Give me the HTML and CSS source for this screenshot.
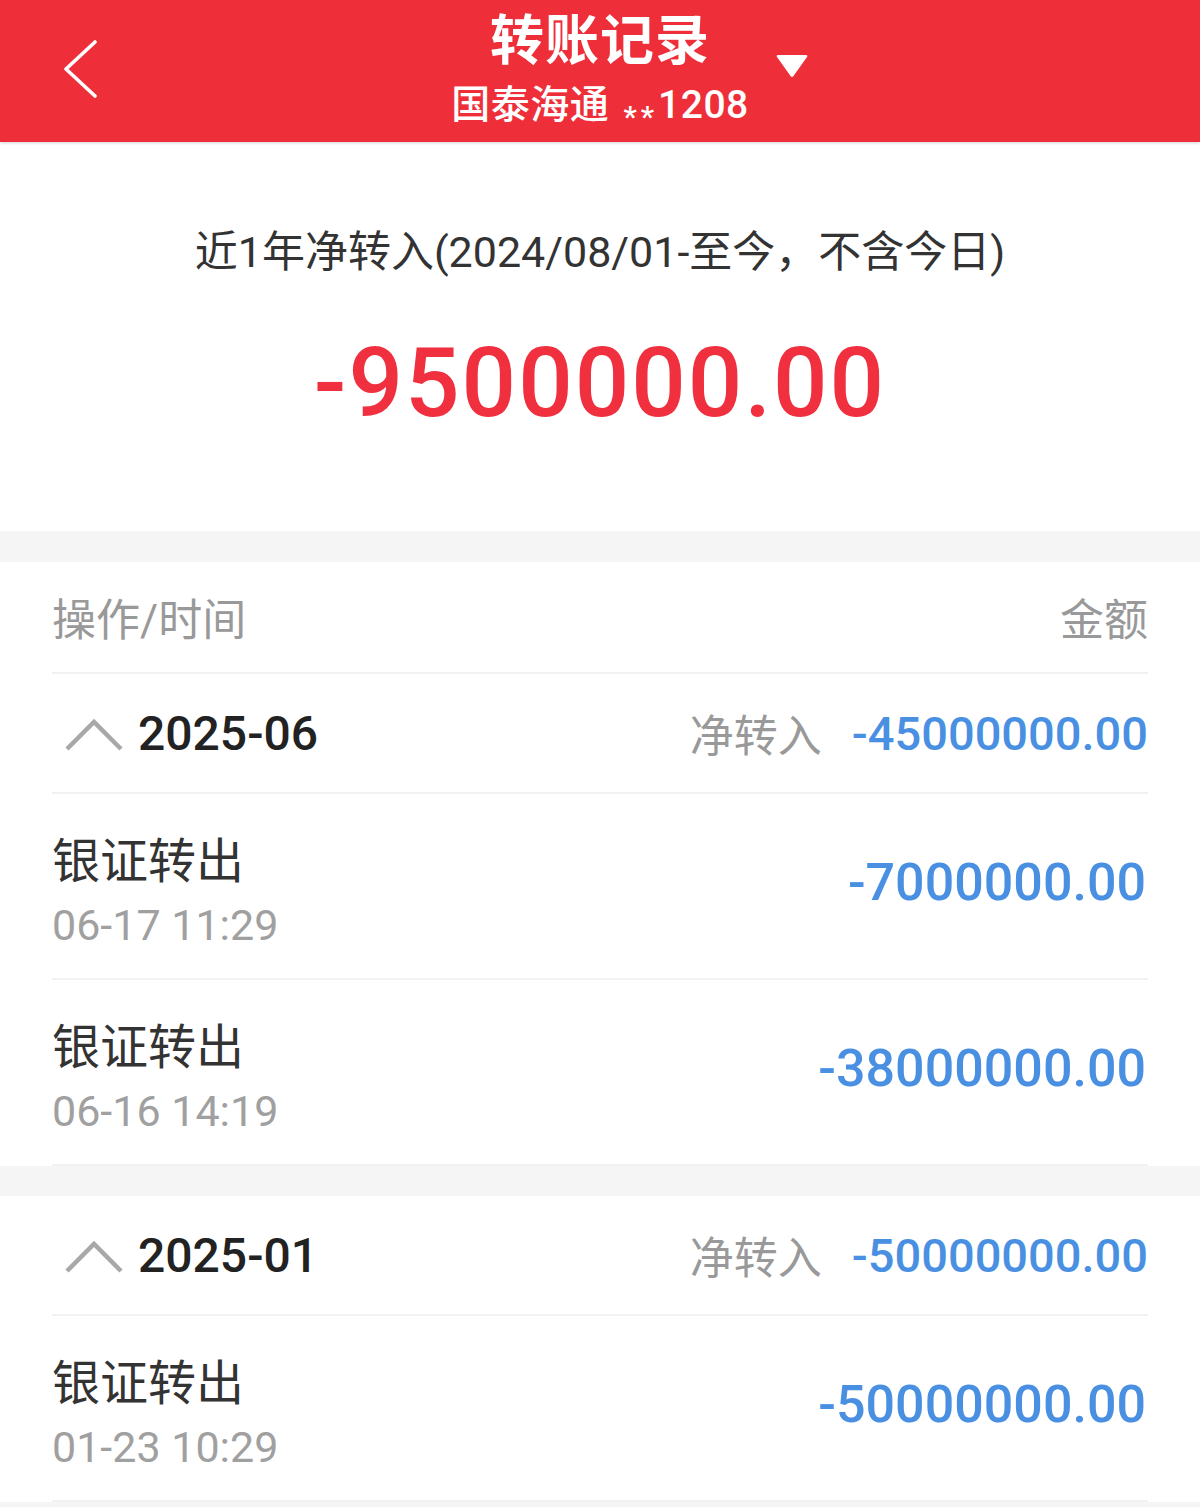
FILE: index.html
```html
<!DOCTYPE html>
<html lang="zh-CN">
<head>
<meta charset="utf-8">
<title>转账记录</title>
<link rel="stylesheet" href="styles.css">
</head>
<body>
<header class="topbar">
  <div class="topbar-left">
    <svg class="back" width="36" height="60" viewBox="0 0 36 60"><polyline points="32,2 3,29 32,56" fill="none" stroke="#fff" stroke-width="3.6" stroke-linecap="round" stroke-linejoin="round"/></svg>
  </div>
  <div class="topbar-center">
    <div class="title">转账记录</div>
    <div class="subtitle">国泰海通 <span class="mask">**</span>1208</div>
  </div>
  <div class="topbar-right">
    <svg class="caret" width="34" height="26" viewBox="0 0 34 26"><path d="M3 2 H31 Q33 2 32 4 L18.5 23 Q17 25 15.5 23 L2 4 Q1 2 3 2 Z" fill="#fff"/></svg>
  </div>
</header>

<section class="summary">
  <div class="summary-label">近1年净转入(2024/08/01-至今，不含今日)</div>
  <div class="summary-value">-9500000.00</div>
</section>

<section class="card">
  <div class="row head-row">
    <span class="muted">操作/时间</span>
    <span class="muted">金额</span>
  </div>
  <div class="row group-row">
    <div class="group-left">
      <svg class="up" width="60" height="36" viewBox="0 0 60 36"><polyline points="3,32 30,5 57,32" fill="none" stroke="#a8a8a8" stroke-width="4.5"/></svg>
      <span class="month">2025-06</span>
    </div>
    <div class="group-right">
      <span class="muted">净转入</span>
      <span class="group-amount">-45000000.00</span>
    </div>
  </div>
  <div class="row item-row">
    <div class="item-left">
      <div class="item-name">银证转出</div>
      <div class="item-time">06-17 11:29</div>
    </div>
    <div class="item-amount">-7000000.00</div>
  </div>
  <div class="row item-row">
    <div class="item-left">
      <div class="item-name">银证转出</div>
      <div class="item-time">06-16 14:19</div>
    </div>
    <div class="item-amount">-38000000.00</div>
  </div>
</section>

<section class="card card-second">
  <div class="row group-row">
    <div class="group-left">
      <svg class="up" width="60" height="36" viewBox="0 0 60 36"><polyline points="3,32 30,5 57,32" fill="none" stroke="#a8a8a8" stroke-width="4.5"/></svg>
      <span class="month">2025-01</span>
    </div>
    <div class="group-right">
      <span class="muted">净转入</span>
      <span class="group-amount">-50000000.00</span>
    </div>
  </div>
  <div class="row item-row">
    <div class="item-left">
      <div class="item-name">银证转出</div>
      <div class="item-time">01-23 10:29</div>
    </div>
    <div class="item-amount">-50000000.00</div>
  </div>
</section>
</body>
</html>
```
FILE: styles.css
```css
* { box-sizing: border-box; }
html, body { margin: 0; padding: 0; }
body {
  background: #f5f5f5;
  font-family: Roboto, "Noto Sans CJK SC", sans-serif;
  color: #333;
}

.topbar {
  height: 142px;
  background: #ee2f3a;
  display: grid;
  grid-template-columns: 1fr auto 1fr;
  box-shadow: 0 1px 3px rgba(0,0,0,0.18);
  position: relative;
  z-index: 1;
}
.topbar-left { padding: 40px 0 0 63px; }
.back { display: block; }
.topbar-center {
  padding-top: 10px;
  display: flex;
  flex-direction: column;
  align-items: center;
  color: #fff;
}
.title {
  font-size: 54px;
  line-height: 64px;
  font-weight: 700;
  letter-spacing: 1px;
}
.subtitle {
  margin-top: 6px;
  font-size: 39px;
  line-height: 50px;
  font-weight: 500;
  letter-spacing: 0.5px;
}
.mask {
  font-size: 30px;
  vertical-align: -9px;
  letter-spacing: 4px;
  margin-left: 4px;
  margin-right: 0;
}
.topbar-right { padding: 53px 0 0 26px; }
.caret { display: block; }

.summary {
  background: #fff;
  height: 389px;
  padding-top: 80px;
  text-align: center;
}
.summary-label {
  font-size: 43px;
  line-height: 60px;
  color: #333;
}
.summary-value {
  margin-top: 41px;
  font-size: 96px;
  line-height: 120px;
  font-weight: 500;
  color: #f0303e;
  letter-spacing: 2px;
}

.card {
  background: #fff;
  margin-top: 31px;
  padding: 0 52px;
}
.card-second { margin-top: 30px; }
.row {
  display: flex;
  justify-content: space-between;
  align-items: center;
  border-bottom: 2px solid #f2f2f2;
}
.muted { color: #999; font-size: 44px; }
.head-row { height: 112px; }

.group-row { height: 120px; }
.group-left { display: flex; align-items: center; }
.up { display: block; margin: 4px 14px 0 12px; }
.month {
  font-size: 48px;
  font-weight: 500;
  color: #222;
}
.group-right { display: flex; align-items: center; }
.group-amount {
  margin-left: 30px;
  font-size: 47px;
  font-weight: 500;
  color: #4a90e2;
}

.item-row {
  height: 186px;
  padding-top: 12px;
}
.item-name {
  font-size: 48px;
  line-height: 56px;
  color: #333;
}
.item-time {
  margin-top: 10px;
  font-size: 43px;
  line-height: 50px;
  color: #a0a0a0;
}
.item-amount {
  font-size: 52px;
  font-weight: 500;
  color: #4a90e2;
  margin-right: 2px;
  margin-bottom: 20px;
}
```
